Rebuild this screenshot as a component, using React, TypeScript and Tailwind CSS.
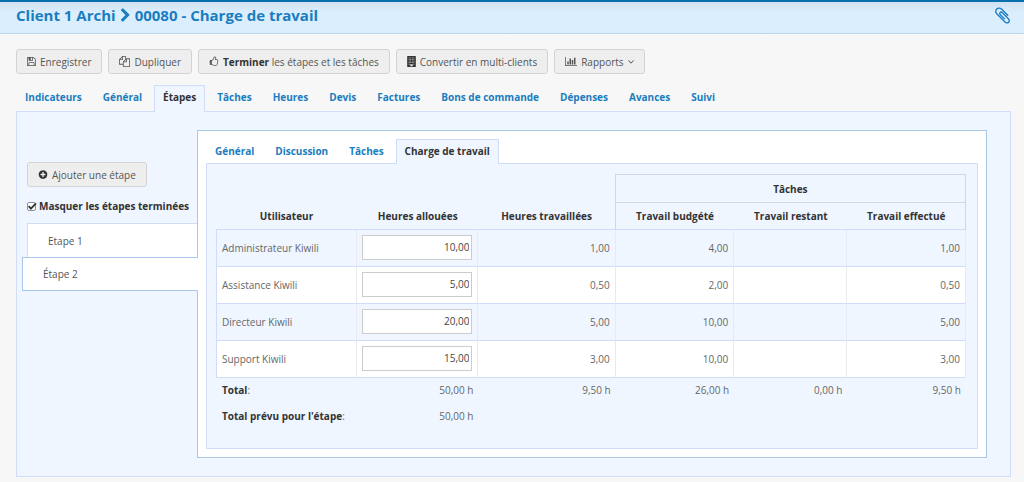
import { useState } from "react";
import type { ReactNode } from "react";

type IconProps = { d: string; box?: string; className?: string };

function Icon({ d, box = "0 0 1792 1792", className = "h-3 w-3" }: IconProps) {
  return (
    <svg viewBox={box} className={`shrink-0 ${className}`} fill="currentColor" aria-hidden="true">
      <path fillRule="evenodd" d={d} />
    </svg>
  );
}

const icons = {
  save: "M384 1536h768v-384h-768v384zm896 0h128v-896q0-14-10-38.5t-20-34.5l-281-281q-10-10-34-20t-39-10v416q0 40-28 68t-68 28h-576q-40 0-68-28t-28-68v-416h-128v1280h128v-416q0-40 28-68t68-28h832q40 0 68 28t28 68v416zm-384-928v-320q0-13-9.5-22.5t-22.5-9.5h-192q-13 0-22.5 9.5t-9.5 22.5v320q0 13 9.5 22.5t22.5 9.5h192q13 0 22.5-9.5t9.5-22.5zm640 32v928q0 40-28 68t-68 28h-1344q-40 0-68-28t-28-68v-1344q0-40 28-68t68-28h928q40 0 88 20t76 48l280 280q28 28 48 76t20 88z",
  copy: "M1696 384q40 0 68 28t28 68v1216q0 40-28 68t-68 28h-960q-40 0-68-28t-28-68v-288h-544q-40 0-68-28t-28-68v-672q0-40 20-88t48-76l408-408q28-28 76-48t88-20h416q40 0 68 28t28 68v328q68-40 128-40h416zm-544 213l-299 299h299v-299zm-640-384l-299 299h299v-299zm196 647l316-316v-416h-384v416q0 40-28 68t-68 28h-416v640h512v-256q0-40 20-88t48-76zm956 804v-1152h-384v416q0 40-28 68t-68 28h-416v640h896z",
  thumb:
    "M384 1344q0-26-19-45t-45-19-45 19-19 45 19 45 45 19 45-19 19-45zm1152-576q0-51-39-89.5t-89-38.5h-352q0-58 48-159.5t48-160.5q0-98-32-145t-128-47q-26 26-38 85t-30.5 125.5-59.5 109.5q-22 23-77 91-4 5-23 30t-31.5 41-34.5 42.5-40 44-38.5 35.5-40 27-35.5 9h-32v640h32q13 0 31.5 3t33 6.5 38 11 35 11.5 35.5 12.5 29 10.5q211 73 342 73h121q192 0 192-167 0-26-5-56 30-16 47.5-52.5t17.5-73.5-18-69q53-50 53-119 0-25-10-55.5t-25-47.5q32-1 53.5-47t21.5-81zm128-1q0 89-49 163 9 33 9 69 0 77-38 144 3 21 3 43 0 101-60 178 1 139-85 219.5t-227 80.5h-129q-96 0-189.5-22.5t-216.5-65.5q-116-40-138-40h-288q-53 0-90.5-37.5t-37.5-90.5v-640q0-53 37.5-90.5t90.5-37.5h274q36-24 137-155 58-75 107-128 24-25 35.5-85.5t30.5-126.5 62-108q39-37 90-37 84 0 151 32.5t102 101.5 35 186q0 93-48 192h176q104 0 180 76t76 179z",
  building:
    "M64 0h1280q64 0 64 64v1664q0 64-64 64h-1280q-64 0-64-64v-1664q0-64 64-64zM256 256v128h128v-128zM512 256v128h128v-128zM768 256v128h128v-128zM1024 256v128h128v-128zM256 512v128h128v-128zM512 512v128h128v-128zM768 512v128h128v-128zM1024 512v128h128v-128zM256 768v128h128v-128zM512 768v128h128v-128zM768 768v128h128v-128zM1024 768v128h128v-128zM256 1024v128h128v-128zM512 1024v128h128v-128zM768 1024v128h128v-128zM1024 1024v128h128v-128zM256 1280v128h128v-128zM1024 1280v128h128v-128zM512 1344v320h384v-320z",
  chart:
    "M640 896v512h-256v-512h256zm384-512v1024h-256v-1024h256zm1024 1152v128h-2048v-1536h128v1408h1920zm-640-896v768h-256v-768h256zm384-384v1152h-256v-1152h256z",
  down: "M1395 736q0 13-10 23l-466 466q-10 10-23 10t-23-10l-466-466q-10-10-10-23t10-23l50-50q10-10 23-10t23 10l393 393 393-393q10-10 23-10t23 10l50 50q10 10 10 23z",
  plus: "M1344 960v-128q0-26-19-45t-45-19h-256v-256q0-26-19-45t-45-19h-128q-26 0-45 19t-19 45v256h-256q-26 0-45 19t-19 45v128q0 26 19 45t45 19h256v256q0 26 19 45t45 19h128q26 0 45-19t19-45v-256h256q26 0 45-19t19-45zm320-64q0 209-103 385.5t-279.5 279.5-385.5 103-385.5-103-279.5-279.5-103-385.5 103-385.5 279.5-279.5 385.5-103 385.5 103 279.5 279.5 103 385.5z",
  right:
    "M1363 877l-742 742q-19 19-45 19t-45-19l-166-166q-19-19-19-45t19-45l531-531-531-531q-19-19-19-45t19-45l166-166q19-19 45-19t45 19l742 742q19 19 19 45t-19 45z",
  clip: "M1596 1385q0 117-79 196t-196 79q-135 0-235-100l-777-776q-113-115-113-271 0-159 110-270t269-111q158 0 273 113l605 606q10 10 10 22 0 16-30.5 46.5t-46.5 30.5q-13 0-23-10l-606-607q-79-77-181-77-106 0-179 75t-73 181q0 105 76 181l776 777q63 63 145 63 64 0 106-42t42-106q0-82-63-145l-581-581q-26-24-60-24-29 0-48 19t-19 48q0 32 25 59l410 410q10 10 10 22 0 16-31 47t-47 31q-12 0-22-10l-410-410q-63-61-63-149 0-82 57-139t139-57q88 0 149 63l581 581q100 98 100 235z",
};

function Button({ children }: { children: ReactNode }) {
  return (
    <button
      type="button"
      className="flex h-[25px] items-center gap-1 rounded-[3px] border border-[#d3d3d3] bg-[#eeeeee] px-[10px] whitespace-nowrap text-[#555555]"
    >
      {children}
    </button>
  );
}

type TabsProps = { items: string[]; active: string; label: string; className: string };

function Tabs({ items, active, label, className }: TabsProps) {
  return (
    <nav aria-label={label} className={`flex gap-[3px] ${className}`}>
      {items.map((item) =>
        item === active ? (
          <a
            key={item}
            href="#"
            aria-current="page"
            className="z-10 -mb-px border border-b-0 border-[#d0dcf8] bg-[#eff6ff] px-2 pt-[3px] font-bold whitespace-nowrap text-[#333333]"
          >
            {item}
          </a>
        ) : (
          <a
            key={item}
            href="#"
            className="border border-b-0 border-transparent px-2 pt-[3px] font-bold whitespace-nowrap text-[#1a7dc0]"
          >
            {item}
          </a>
        ),
      )}
    </nav>
  );
}

const mainTabs = [
  "Indicateurs",
  "Général",
  "Étapes",
  "Tâches",
  "Heures",
  "Devis",
  "Factures",
  "Bons de commande",
  "Dépenses",
  "Avances",
  "Suivi",
];

const rows = [
  { user: "Administrateur Kiwili", allotted: "10,00", worked: "1,00", budget: "4,00", left: "", done: "1,00" },
  { user: "Assistance Kiwili", allotted: "5,00", worked: "0,50", budget: "2,00", left: "", done: "0,50" },
  { user: "Directeur Kiwili", allotted: "20,00", worked: "5,00", budget: "10,00", left: "", done: "5,00" },
  { user: "Support Kiwili", allotted: "15,00", worked: "3,00", budget: "10,00", left: "", done: "3,00" },
];

const headCell = "h-[27px] border-b border-[#d0dcf8] p-0 text-center align-middle font-bold";
const numCell = "border-r border-b border-r-[#e8eaf0] border-b-[#d0dcf8] px-[5px] py-0 text-right";
const totalCell = "px-[5px] pt-0 pb-[2px] text-right";

function Workload() {
  return (
    <table className="w-full table-fixed border-separate border-spacing-0 text-[#666666]">
      <colgroup>
        <col className="w-[18.8%]" />
        <col className="w-[16.2%]" />
        <col className="w-[18.3%]" />
        <col className="w-[15.8%]" />
        <col className="w-[15.1%]" />
        <col className="w-[15.8%]" />
      </colgroup>
      <thead className="text-[#333333]">
        <tr>
          <td colSpan={2} className="h-[29px] p-0" />
          <td className="border-r border-[#d0d6ea] p-0" />
          <th colSpan={3} scope="colgroup" className="border border-l-0 border-[#d0d6ea] p-0 text-center align-middle font-bold">
            Tâches
          </th>
        </tr>
        <tr>
          <th scope="col" className={headCell}>Utilisateur</th>
          <th scope="col" className={headCell}>Heures allouées</th>
          <th scope="col" className={`${headCell} border-r border-r-[#d0d6ea]`}>Heures travaillées</th>
          <th scope="col" className={headCell}>Travail budgété</th>
          <th scope="col" className={headCell}>Travail restant</th>
          <th scope="col" className={`${headCell} border-r border-r-[#d0d6ea]`}>Travail effectué</th>
        </tr>
      </thead>
      <tbody>
        {rows.map((row) => (
          <tr key={row.user} className="h-[37px] even:bg-white">
            <td className="border-x border-b border-[#d0dcf8] border-r-[#e8eaf0] px-[5px] py-0">{row.user}</td>
            <td className="border-r border-b border-r-[#e8eaf0] border-b-[#d0dcf8] px-[5px] pt-0 pb-px">
              <input
                type="text"
                aria-label={`Heures allouées, ${row.user}`}
                defaultValue={row.allotted}
                className="block h-[25px] w-full border border-[#cccccc] bg-white px-[2px] pb-px text-right text-[#444444]"
              />
            </td>
            <td className={numCell}>{row.worked}</td>
            <td className={numCell}>{row.budget}</td>
            <td className={numCell}>{row.left}</td>
            <td className={numCell}>{row.done}</td>
          </tr>
        ))}
      </tbody>
      <tfoot>
        <tr className="h-[26px]">
          <td className="px-[6px] pt-0 pb-[2px]">
            <strong className="text-[#333333]">Total</strong>:
          </td>
          <td className={totalCell}>50,00 h</td>
          <td className={totalCell}>9,50 h</td>
          <td className={totalCell}>26,00 h</td>
          <td className={totalCell}>0,00 h</td>
          <td className={totalCell}>9,50 h</td>
        </tr>
        <tr className="h-[26px]">
          <td className="px-[6px] pt-0 pb-[2px] whitespace-nowrap">
            <strong className="text-[#333333]">Total prévu pour l'étape</strong>:
          </td>
          <td className={totalCell}>50,00 h</td>
          <td colSpan={4} />
        </tr>
      </tfoot>
    </table>
  );
}

export default function App() {
  const [hideDone, setHideDone] = useState(true);

  return (
    <div className="min-h-screen bg-[#f7f7f7] pb-[5px] font-['Open_Sans','Noto_Sans',sans-serif] text-[10px] leading-4">
      <header className="flex h-[34px] items-center justify-between border-t-2 border-b border-t-[#0a6fae] border-b-[#bcd6ee] bg-linear-to-b from-[#d0e2f2] to-[#dbeefe] to-35% pr-3 pb-[5px] pl-4 text-[#1a7dc0]">
        <h1 className="flex items-center gap-1 text-[15px] leading-5 font-bold">
          Client 1 Archi
          <Icon d={icons.right} className="h-[15px] w-[11px]" box="256 0 1280 1792" />
          00080 - Charge de travail
        </h1>
        <a href="#" aria-label="Pièces jointes">
          <Icon d={icons.clip} className="h-[19px] w-[19px]" />
        </a>
      </header>

      <main className="pt-[15px] pr-[13px] pl-4">
        <div className="flex gap-[6px]">
          <Button>
            <Icon d={icons.save} box="0 0 1536 1792" className="h-[11px] w-[9px]" />
            Enregistrer
          </Button>
          <Button>
            <Icon d={icons.copy} className="h-[11px] w-[11px]" />
            Dupliquer
          </Button>
          <Button>
            <Icon d={icons.thumb} className="h-[11px] w-[10px]" />
            <span>
              <strong className="text-[#333333]">Terminer</strong> les étapes et les tâches
            </span>
          </Button>
          <Button>
            <Icon d={icons.building} box="0 0 1408 1792" className="h-[11px] w-[9px] text-[#333333]" />
            Convertir en multi-clients
          </Button>
          <Button>
            <Icon d={icons.chart} box="0 0 2048 1792" className="h-[11px] w-3" />
            Rapports
            <Icon d={icons.down} box="384 640 1024 640" className="h-1 w-[6px]" />
          </Button>
        </div>

        <div className="pt-[11px]">
          <Tabs items={mainTabs} active="Étapes" label="Projet" className="h-[26px]" />
        </div>

        <div className="flex border border-[#d0dcf8] bg-[#eff6ff] pt-[18px] pr-[23px] pb-[18px]">
          <aside className="flex w-[180px] shrink-0 flex-col pt-8">
            <div className="flex pl-[10px]">
              <Button>
                <Icon d={icons.plus} className="h-[11px] w-[10px] text-[#333333]" />
                Ajouter une étape
              </Button>
            </div>
            <label className="mt-[11px] flex items-center gap-[3px] pl-[10px] font-bold whitespace-nowrap text-[#333333]">
              <span className="grid h-[9px] w-[9px] shrink-0 place-items-center">
                <input
                  type="checkbox"
                  checked={hideDone}
                  onChange={(e) => setHideDone(e.target.checked)}
                  className="peer col-start-1 row-start-1 h-[9px] w-[9px] appearance-none rounded-[2px] border border-[#8a94a0] bg-white"
                />
                <svg
                  viewBox="0 0 9 9"
                  className="pointer-events-none invisible col-start-1 row-start-1 h-[9px] w-[9px] overflow-visible peer-checked:visible"
                  fill="none"
                  stroke="#333333"
                  strokeWidth="1.8"
                  aria-hidden="true"
                >
                  <path d="M1.6 4.2 L3.9 6.6 L9 1.4" />
                </svg>
              </span>
              Masquer les étapes terminées
            </label>
            <a
              href="#"
              className="mt-[9px] ml-[10px] flex h-[34px] items-center border border-r-0 border-b-0 border-[#d0dcf8] bg-white pl-5 text-[#555555]"
            >
              Etape 1
            </a>
            <a
              href="#"
              aria-current="true"
              className="z-10 -mr-px ml-[5px] flex h-[34px] items-center border border-r-0 border-[#a9c9ea] bg-white pl-5 text-[#555555]"
            >
              Étape 2
            </a>
          </aside>

          <section className="min-w-0 flex-1 border border-[#a9c9ea] bg-white p-2">
            <Tabs
              items={["Général", "Discussion", "Tâches", "Charge de travail"]}
              active="Charge de travail"
              label="Étape"
              className="h-6"
            />
            <div className="border border-[#d0dcf8] bg-[#eff6ff] pt-[10px] pr-[11px] pb-[18px] pl-[9px]">
              <Workload />
            </div>
          </section>
        </div>
      </main>
    </div>
  );
}
